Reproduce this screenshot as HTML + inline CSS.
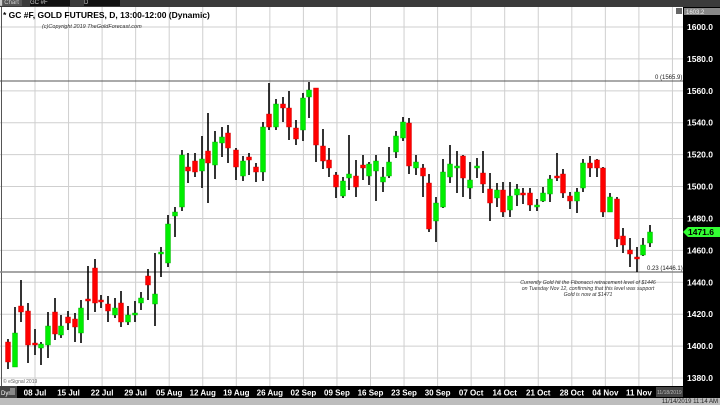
<!DOCTYPE html>
<html><head><meta charset="utf-8"><style>
body{margin:0;width:720px;height:405px;overflow:hidden;background:#fff;font-family:"Liberation Sans",sans-serif;position:relative}
.a{position:absolute}
</style></head><body>
<div class="a" style="left:0;top:0;width:720px;height:7px;background:#3b3b3b"></div>
<div class="a" style="left:0;top:0;width:22px;height:6px;background:#555;font-size:6px;color:#ccc;line-height:6px">▌Chart</div>
<div class="a" style="left:30px;top:0;width:40px;height:6px;background:#111;font-size:6px;color:#ccc;line-height:6px">GC #F</div>
<div class="a" style="left:84px;top:0;width:36px;height:6px;background:#111;font-size:6px;color:#ccc;line-height:6px">D</div>
<div class="a" style="left:0;top:398px;width:720px;height:7px;background:#bdbdbd"></div>
<div class="a" style="right:2px;top:399px;font-size:6px;color:#222">11/14/2019 11:14 AM</div>
<svg class="a" style="left:0;top:0" width="720" height="405" id="s"></svg>
<script>
var s=document.getElementById('s'),h='';
function Y(p){return 27+(1600-p)*1.5955}
for(var k=-1;k<20;k++){var x=35+33.55*k;if(x>0&&x<683)h+='<line x1="'+x+'" y1="7" x2="'+x+'" y2="386" stroke="#cfcfcf" stroke-width="1"/>';}
for(var p=1600;p>=1380;p-=20){var y=Y(p);h+='<line x1="0" y1="'+y+'" x2="683" y2="'+y+'" stroke="#cfcfcf"/>';}
h+='<line x1="1.5" y1="7" x2="1.5" y2="386" stroke="#555"/>';
h+='<line x1="0" y1="81" x2="683" y2="81" stroke="#555"/>';
h+='<line x1="0" y1="272" x2="683" y2="272" stroke="#888" stroke-width="1.5"/>';
var c=[[8,'r',342,362,339,369],[15,'g',333,367,307,367],[21,'r',306,312,280,322],[28,'r',311,345,303,363],[35,'r',343,345,329,355],[41,'g',344,348,342,365],[48,'g',326,345,312,358],[55,'r',312,334,298,340],[61,'g',326,335,315,338],[68,'r',317,323,311,330],[75,'r',319,327,313,342],[81,'g',308,333,300,343],[88,'r',299,301,266,320],[95,'r',268,303,259,312],[101,'r',300,302,295,308],[108,'r',304,311,296,322],[115,'g',308,315,298,318],[121,'r',303,322,291,327],[128,'g',315,322,306,325],[135,'g',313,315,301,322],[141,'g',298,303,292,310],[148,'r',276,285,269,300],[155,'g',294,304,253,326],[161,'g',252,254,247,277],[168,'g',224,263,215,267],[175,'g',212,216,207,237],[182,'g',155,207,150,211],[188,'r',167,171,153,183],[195,'r',161,172,153,177],[202,'g',159,171,136,188],[208,'r',151,163,113,203],[215,'g',142,165,131,179],[222,'g',137,143,127,157],[228,'r',133,148,125,163],[236,'r',150,167,148,180],[243,'g',161,176,156,181],[249,'r',157,160,153,175],[256,'r',167,172,163,182],[263,'g',127,172,122,181],[269,'r',114,127,83,130],[276,'g',104,127,99,130],[283,'r',104,108,97,122],[289,'r',108,127,91,140],[296,'r',128,139,120,145],[303,'g',98,130,93,141],[309,'g',90,97,82,118],[316,'r',88,145,88,162],[323,'r',146,161,129,169],[329,'r',160,168,148,177],[336,'r',175,187,172,198],[343,'g',181,196,177,198],[349,'g',174,178,135,190],[356,'r',176,187,160,197],[363,'r',165,168,155,180],[369,'g',164,176,162,185],[376,'g',161,171,155,201],[383,'g',177,182,167,192],[389,'g',162,176,147,178],[396,'g',136,152,131,158],[403,'g',122,138,117,141],[409,'r',123,166,118,174],[416,'g',162,168,155,175],[423,'r',168,176,164,197],[429,'r',183,229,174,232],[436,'g',203,221,197,242],[443,'g',172,207,159,208],[450,'g',164,177,145,183],[457,'g',166,168,151,193],[463,'r',156,178,155,197],[470,'g',180,188,162,199],[477,'g',166,168,158,178],[483,'r',173,184,151,193],[490,'r',189,203,173,221],[497,'g',190,198,183,207],[503,'r',190,212,182,217],[510,'g',196,210,182,217],[517,'g',189,195,184,206],[523,'r',193,195,188,204],[530,'r',193,205,188,211],[537,'g',205,207,199,211],[543,'g',193,201,187,202],[550,'g',179,194,175,202],[557,'r',176,178,153,181],[563,'r',174,193,169,198],[570,'r',196,201,192,209],[577,'g',192,201,188,213],[583,'g',163,188,159,192],[590,'r',163,168,156,177],[597,'r',160,168,159,177],[603,'r',168,212,167,217],[610,'g',197,212,193,212],[617,'r',199,239,197,247],[623,'r',236,245,228,253],[630,'r',250,254,238,267],[637,'r',257,259,247,272],[643,'g',245,255,238,256],[650,'g',232,243,225,247]];
c.forEach(function(d){var x=d[0];h+='<line x1="'+x+'" y1="'+d[4]+'" x2="'+x+'" y2="'+d[5]+'" stroke="#000" stroke-width="1.6"/>';var t=d[2],b=Math.max(d[3],d[2]+2);h+='<rect x="'+(x-2.5)+'" y="'+t+'" width="5" height="'+(b-t)+'" fill="'+(d[1]=='r'?'#ff0000':'#00ee00')+'" stroke="'+(d[1]=='r'?'#c00':'#0a0')+'" stroke-width="0.4"/>';});
h+='<text x="3" y="18" font-size="8.5" font-weight="bold" fill="#000">* GC #F, GOLD FUTURES, D, 13:00-12:00 (Dynamic)</text>';
h+='<text x="42" y="28" font-size="5.5" font-style="italic" fill="#333">(c)Copyright 2019 TheGoldForecast.com</text>';
h+='<text x="655" y="79" font-size="6" fill="#222">0 (1565.9)</text>';
h+='<text x="647" y="270" font-size="6" fill="#222">0.23 (1446.1)</text>';
h+='<g font-size="5.2" font-style="italic" fill="#333" text-anchor="middle"><text x="588" y="284">Currently Gold hit the Fibonacci retracement level of $1446</text><text x="588" y="290">on Tuesday Nov 12, confirming that this level was support</text><text x="588" y="296">Gold is now at $1471</text></g>';
h+='<text x="3" y="383" font-size="5" fill="#666">© eSignal 2019</text>';
h+='<rect x="676" y="8" width="6" height="6" fill="#666"/>';
h+='<rect x="683" y="7" width="37" height="391" fill="#000"/>';
h+='<rect x="684" y="8" width="36" height="7" fill="#888"/><text x="686" y="14" font-size="6" fill="#eee">1603.2</text>';
for(var p=1600;p>=1380;p-=20){h+='<text x="687" y="'+(Y(p)+3)+'" font-size="8.5" font-weight="bold" fill="#fff">'+p+'.0</text>';}
h+='<path d="M683,232 L688,227 L720,227 L720,237 L688,237 Z" fill="#33ff33"/><text x="688" y="235" font-size="8.5" font-weight="bold" fill="#000">1471.6</text>';
h+='<rect x="0" y="386" width="683" height="12" fill="#000"/>';
h+='<rect x="0" y="386" width="17" height="12" fill="#444"/><text x="1" y="395" font-size="6" fill="#fff">Dyn</text><rect x="10" y="388" width="5" height="7" fill="#888"/>';
var L=['08 Jul','15 Jul','22 Jul','29 Jul','05 Aug','12 Aug','19 Aug','26 Aug','02 Sep','09 Sep','16 Sep','23 Sep','30 Sep','07 Oct','14 Oct','21 Oct','28 Oct','04 Nov','11 Nov'];
L.forEach(function(t,i){h+='<text x="'+(35+33.55*i)+'" y="395.5" font-size="8" font-weight="bold" fill="#fff" text-anchor="middle">'+t+'</text>';});
h+='<rect x="656" y="387" width="27" height="10" fill="#444"/><text x="657" y="394" font-size="5" fill="#bbb">11/18/2019</text>';
s.innerHTML=h;
</script>
</body></html>
